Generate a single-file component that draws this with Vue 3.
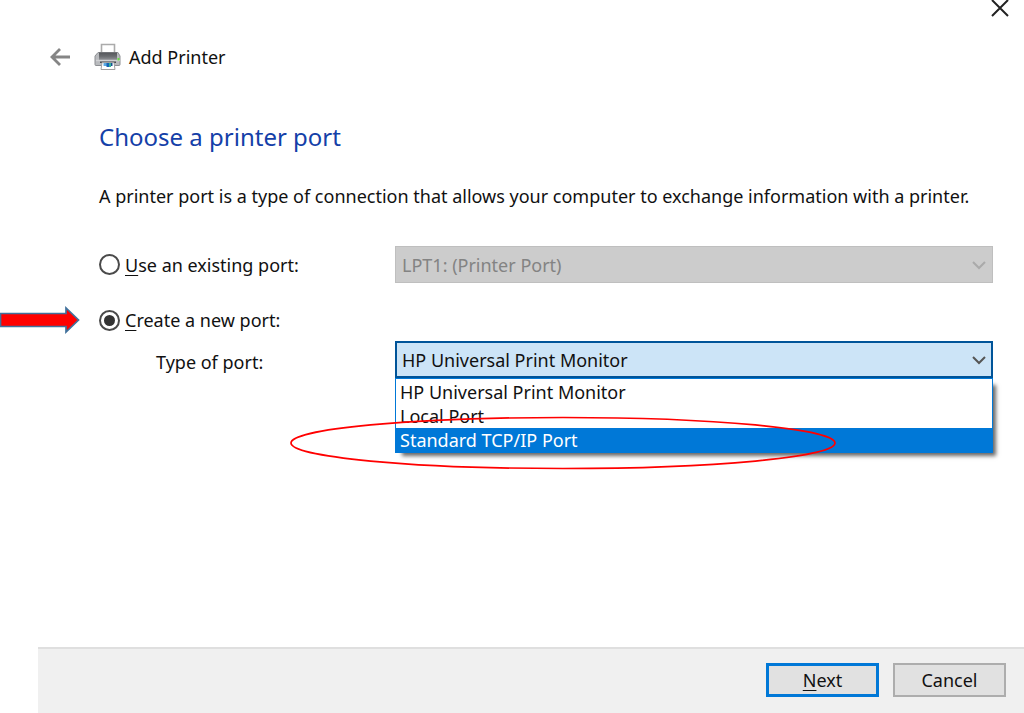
<script setup>
import { ref } from 'vue'

const mode = ref('new')
const existing = ref('LPT1: (Printer Port)')
const types = ['HP Universal Print Monitor', 'Local Port', 'Standard TCP/IP Port']
const portType = ref(types[0])
const highlighted = ref(2)
</script>

<template>
  <main class="dialog">
    <div class="titlebar">
      <button class="icon-button" type="button" aria-label="Close">
        <svg width="18" height="18" viewBox="0 0 18 18"><path d="M1 0 17 16M17 0 1 16" fill="none" stroke="#222" stroke-width="2" /></svg>
      </button>
    </div>

    <header class="header">
      <button class="icon-button" type="button" aria-label="Back">
        <svg width="22" height="20" viewBox="0 0 22 20"><path d="M21 10H3M11 2 3 10l8 8" fill="none" stroke="#858585" stroke-width="2.8" /></svg>
      </button>
      <svg class="printer" width="28" height="28" viewBox="0 0 28 28" aria-hidden="true">
        <defs>
          <linearGradient id="printer-body" x1="0" y1="0" x2="0" y2="1">
            <stop offset="0" stop-color="#55575b" />
            <stop offset="0.5" stop-color="#6a6c70" />
            <stop offset="1" stop-color="#929498" />
          </linearGradient>
        </defs>
        <path d="M7.500 11V1.500h13V11" fill="#fff" stroke="#ababab" stroke-width="1.6" />
        <path d="M4 9.500h20l2 3.500v8.500q0 1-1 1H2q-1 0-1-1V13z" fill="#b9bbbe" stroke="#8d8f93" />
        <path d="M5 9.500h18v7.500H5z" fill="url(#printer-body)" />
        <path d="M2 17.500h24" stroke="#d2d3d5" stroke-width="1.4" />
        <path d="M6 18.500h16v1.500H6z" fill="#4a4c50" />
        <path d="M8 19.500h12l1 7H7z" fill="#fff" stroke="#a0a0a0" />
        <path d="M9.500 20h4v3h-4z" fill="#5aa9e2" />
        <path d="M12.500 20h2.500v4h-2.500z" fill="#1763b5" />
        <path d="M15 20h2v4h-2z" fill="#35b49c" />
        <path d="M17 20h1.500v3H17z" fill="#174f91" />
        <path d="M23.500 15h2v2.500h-2z" fill="#69dc45" />
      </svg>
      <span>Add Printer</span>
    </header>

    <section class="content">
      <h1>Choose a printer port</h1>
      <p>A printer port is a type of connection that allows your computer to exchange information with a printer.</p>

      <form class="fields">
        <label class="choice">
          <input v-model="mode" type="radio" name="mode" value="existing" />
          <span><u>U</u>se an existing port:</span>
        </label>
        <div class="combo disabled">
          <select v-model="existing" aria-label="Existing port" disabled>
            <option>LPT1: (Printer Port)</option>
          </select>
          <svg class="chevron" width="16" height="10" viewBox="0 0 16 10"><path d="m2 2 6 6 6-6" /></svg>
        </div>

        <div class="new-port">
          <svg class="arrow" width="80" height="28" viewBox="0 0 80 28" aria-hidden="true">
            <path d="M.5 7.500H66V2l12.500 12L66 26v-5.500H.5z" fill="#f00" stroke="#41719c" stroke-width="1.7" />
          </svg>
          <label class="choice">
            <input v-model="mode" type="radio" name="mode" value="new" />
            <span><u>C</u>reate a new port:</span>
          </label>
        </div>

        <label class="type-label" for="port-type">Type of port:</label>
        <div class="combo open">
          <select id="port-type" v-model="portType">
            <option v-for="name in types" :key="name">{{ name }}</option>
          </select>
          <svg class="chevron" width="16" height="10" viewBox="0 0 16 10"><path d="m2 2 6 6 6-6" /></svg>
          <ul class="menu" role="listbox" aria-label="Type of port">
            <li
              v-for="(name, i) in types"
              :key="name"
              role="option"
              :aria-selected="i === highlighted"
              :class="{ active: i === highlighted }"
              @mouseenter="highlighted = i"
              @click="portType = name"
            >{{ name }}</li>
          </ul>
          <svg class="ring" width="548" height="54" viewBox="0 0 548 54" aria-hidden="true">
            <ellipse cx="274" cy="27" rx="272" ry="25.500" fill="none" stroke="#f00" stroke-width="1.700" />
          </svg>
        </div>
      </form>
    </section>

    <footer class="footer">
      <button class="action primary" type="button"><span><u>N</u>ext</span></button>
      <button class="action" type="button">Cancel</button>
    </footer>
  </main>
</template>

<style>
body {
  margin: 0;
  background: #fff;
}
</style>

<style scoped>
* {
  box-sizing: border-box;
}
.dialog {
  display: flex;
  flex-direction: column;
  min-height: 100vh;
  overflow: hidden;
  color: #111;
  font-family: "Noto Sans", "Open Sans", sans-serif;
  font-size: 18px;
  line-height: 24px;
}
button,
select {
  color: inherit;
  font: inherit;
}
u {
  text-decoration-thickness: 1px;
  text-underline-offset: 3px;
}
svg {
  display: block;
}
.titlebar {
  display: flex;
  justify-content: flex-end;
  padding-right: 15px;
}
.icon-button {
  padding: 0;
  border: 0;
  background: none;
}
.header {
  display: flex;
  align-items: center;
  margin-top: 25px;
  padding-left: 49px;
}
.printer {
  margin: 0 7px 0 23px;
}
.content {
  flex: 1;
  padding: 48px 31px 24px 99px;
}
h1 {
  margin: 0;
  color: #1440a8;
  font-size: 24px;
  font-weight: 400;
  line-height: 36px;
}
p {
  margin: 29px 0 0;
  white-space: nowrap;
}
.fields {
  display: grid;
  grid-template-columns: 296px 1fr;
  align-items: center;
  margin-top: 38px;
}
.choice {
  display: flex;
  align-items: center;
  gap: 5px;
}
.choice input {
  display: grid;
  place-items: center;
  width: 21px;
  height: 21px;
  margin: 0;
  border: 2px solid #4a4a4a;
  border-radius: 50%;
  background: #fff;
  appearance: none;
}
.choice input:checked::before {
  width: 11px;
  height: 11px;
  border-radius: 50%;
  background: #333;
  content: "";
}
.new-port {
  position: relative;
  grid-column: 1 / -1;
  padding: 25px 0 9px;
}
.arrow {
  position: absolute;
  top: 23px;
  left: -99px;
}
.type-label {
  padding: 4px 0 0 57px;
}
.combo {
  position: relative;
}
.combo select {
  display: block;
  width: 100%;
  height: 37px;
  padding: 0 5px;
  border: 2px solid #005499;
  border-radius: 0;
  background: #cce4f7;
  appearance: none;
  outline: none;
}
.disabled select {
  border: 1px solid #bfbfbf;
  padding: 0 6px;
  background: #ccc;
  color: #838383;
  opacity: 1;
}
.chevron {
  position: absolute;
  top: 14px;
  right: 6px;
  fill: none;
  stroke: #555;
  stroke-width: 2;
  pointer-events: none;
}
.disabled .chevron {
  stroke: #aaa;
}
.menu {
  position: absolute;
  top: 100%;
  right: 0;
  left: 0;
  margin: 0;
  padding: 1px 0 0;
  border: 1px solid #0078d7;
  background: #fff;
  box-shadow: 5px 5px 4px -2px rgba(0, 0, 0, 0.6);
  list-style: none;
}
.menu li {
  padding: 0 4px;
}
.menu .active {
  background: #0078d7;
  color: #fff;
}
.ring {
  position: absolute;
  top: 75px;
  left: -106px;
  pointer-events: none;
}
.footer {
  display: flex;
  justify-content: flex-end;
  gap: 14px;
  margin-left: 38px;
  padding: 14px 18px 16px;
  border-top: 2px solid #dfdfdf;
  background: #f0f0f0;
}
.action {
  width: 113px;
  height: 34px;
  padding: 0;
  border: 2px solid #adadad;
  background: #e1e1e1;
}
.primary {
  border: 3px solid #0078d7;
}
</style>
